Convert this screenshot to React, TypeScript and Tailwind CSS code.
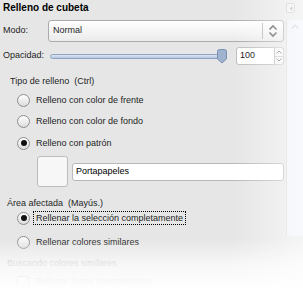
import React from "react";

const Radio = ({ checked = false }: { checked?: boolean }) => (
  <div className="w-[13px] h-[13px] rounded-full border border-[#8e8e8e] bg-gradient-to-b from-white to-[#dcdcdc] flex items-center justify-center shrink-0">
    {checked && <div className="w-[6px] h-[6px] rounded-full bg-[#111]" />}
  </div>
);

const RadioRow = ({
  label,
  checked = false,
  focused = false,
  className = "",
}: {
  label: string;
  checked?: boolean;
  focused?: boolean;
  className?: string;
}) => (
  <div className={`flex items-center h-[16px] pl-[14px] ${className}`}>
    <Radio checked={checked} />
    {focused ? (
      <span className="ml-[3px] px-[2px] leading-[12px] border border-dotted border-black">{label}</span>
    ) : (
      <span className="ml-[6px] leading-[12px]">{label}</span>
    )}
  </div>
);

export default function App() {
  return (
    <div className="relative w-[303px] h-[291px] overflow-hidden bg-white font-['Liberation_Sans',Arial,sans-serif] text-[9px] text-[#1e1e1e]">
      <div className="flex h-full">
        {/* panel */}
        <div className="w-[286px] h-full bg-[#e6e6e6] flex flex-col pl-[3px] pr-[2px]">
          <div className="mt-[2px] h-[12px] leading-[12px] text-[10px] font-bold text-black">Relleno de cubeta</div>

          <div className="mt-[6px] h-[22px] flex items-center">
            <span className="w-[45px]">Modo:</span>
            <div className="flex-1 h-full flex items-center rounded-[3px] border border-[#ababab] bg-gradient-to-b from-white to-[#ebebeb]">
              <span className="flex-1 pl-[4px]">Normal</span>
              <div className="w-px h-[16px] bg-[#b5b5b5]" />
              <svg width="18" height="14" viewBox="0 0 18 14" className="mx-[1px]">
                <path d="M5.5 5.5 L9 2 L12.5 5.5" fill="none" stroke="#555" strokeWidth="1.6" />
                <path d="M5.5 8.5 L9 12 L12.5 8.5" fill="none" stroke="#555" strokeWidth="1.6" />
              </svg>
            </div>
          </div>

          <div className="mt-[5px] h-[18px] flex items-center">
            <span className="w-[47px]">Opacidad:</span>
            <div className="flex-1 flex items-center">
              <div className="flex-1 h-[5px] rounded-full border border-[#8fa4c2] bg-gradient-to-b from-[#dde6f3] to-[#b4c5dd]" />
              <svg width="12" height="15" viewBox="0 0 12 15" className="-ml-[4px]">
                <path d="M1.5 2.5 Q1.5 0.5 3.5 0.5 L8.5 0.5 Q10.5 0.5 10.5 2.5 L10.5 10 L6 14 L1.5 10 Z" fill="#9fb3cf" stroke="#7990b2" />
              </svg>
              <div className="w-[8px]" />
            </div>
            <div className="w-[39px] h-full rounded-l-[3px] border border-[#bdbdbd] bg-white pl-[3px] flex items-center text-[9px] text-black">100</div>
            <div className="w-[9px] h-full flex flex-col">
              <div className="flex-1 border border-l-0 border-[#c8c8c8] rounded-tr-[3px] bg-[#f6f6f6] flex items-center justify-center">
                <svg width="6" height="4" viewBox="0 0 6 4"><path d="M0.5 3.5 L3 1 L5.5 3.5" fill="none" stroke="#777" /></svg>
              </div>
              <div className="flex-1 border border-l-0 border-t-0 border-[#c8c8c8] rounded-br-[3px] bg-[#f6f6f6] flex items-center justify-center">
                <svg width="6" height="4" viewBox="0 0 6 4"><path d="M0.5 0.5 L3 3 L5.5 0.5" fill="none" stroke="#777" /></svg>
              </div>
            </div>
          </div>

          <div className="mt-[10px] h-[12px] leading-[12px] pl-[7px]">Tipo de relleno&nbsp; (Ctrl)</div>
          <RadioRow className="mt-[5px]" label="Relleno con color de frente" />
          <RadioRow className="mt-[5px]" label="Relleno con color de fondo" />
          <RadioRow className="mt-[6px]" label="Relleno con patrón" checked />

          <div className="mt-[5px] h-[31px] flex items-center pl-[34px]">
            <div className="w-[31px] h-[31px] rounded-[3px] border border-[#bcbcbc] bg-[#f7f7f7]" />
            <div className="ml-[4px] flex-1 h-[18px] rounded-[3px] border border-[#b9b9b9] bg-white pl-[3px] flex items-center text-black">Portapapeles</div>
          </div>

          <div className="mt-[10px] h-[12px] leading-[12px] pl-[4px]">Área afectada&nbsp; (Mayús.)</div>
          <RadioRow className="mt-[1px]" label="Rellenar la selección completamente" checked focused />
          <RadioRow className="mt-[8px]" label="Rellenar colores similares" />

          <div className="mt-[7px] h-[12px] leading-[12px] pl-[4px] text-[#a8a8a8]">Buscando colores similares</div>
          <div className="mt-[6px] h-[14px] flex items-center pl-[14px] text-[#a8a8a8]">
            <div className="w-[12px] h-[12px] rounded-[2px] border border-[#b0b0b0] bg-[#eeeeee]" />
            <span className="ml-[6px]">Rellenar áreas transparentes</span>
          </div>
        </div>

        {/* scrollbar column */}
        <div className="w-[17px] h-full bg-[#e6e6e6] flex flex-col">
          <div className="h-[20px] flex items-start pt-[3px]">
            <div className="w-[9px] h-[10px] rounded-[2px] border border-[#c4c4c4] bg-[#efefef] flex items-center justify-center">
              <svg width="4" height="5" viewBox="0 0 4 5"><path d="M3.5 0 L0.5 2.5 L3.5 5 Z" fill="#aaa" /></svg>
            </div>
          </div>
          <div className="h-[216px] border-l border-[#d6d6d6] bg-[#eef1fa] flex flex-col items-center pt-[4px]">
            <svg width="8" height="5" viewBox="0 0 8 5"><path d="M0.5 4.5 L4 1 L7.5 4.5" fill="none" stroke="#c4c4c4" strokeWidth="1.2" /></svg>
          </div>
        </div>
      </div>

      {/* fade to white on the right and bottom */}
      <div className="absolute top-0 right-0 w-[70px] h-full bg-gradient-to-r from-white/0 to-white/60 pointer-events-none" />
      <div className="absolute left-0 bottom-0 w-full h-[52px] bg-gradient-to-b from-white/0 via-white/70 to-white pointer-events-none" />
    </div>
  );
}
